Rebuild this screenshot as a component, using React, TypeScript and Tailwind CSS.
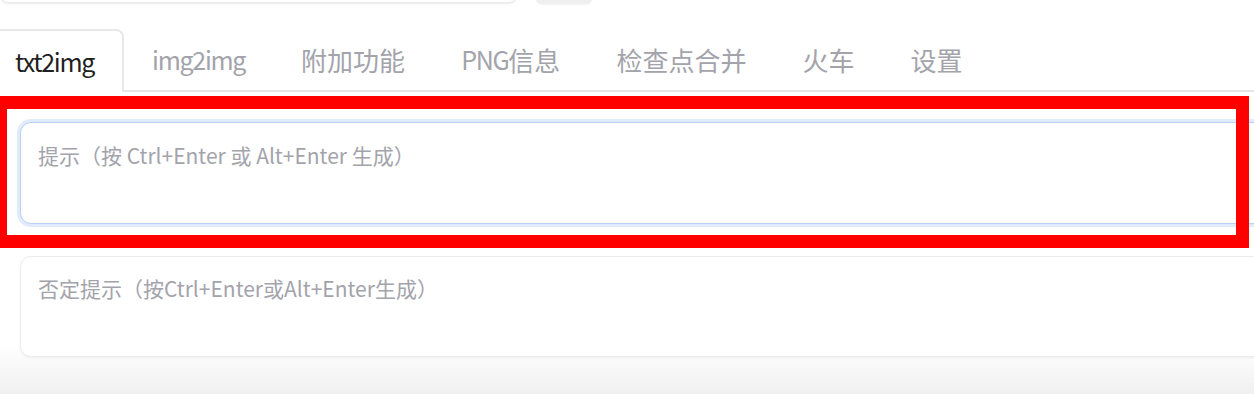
import React from 'react';

const tabs = ['txt2img', 'img2img', '附加功能', 'PNG信息', '检查点合并', '火车', '设置'];

const font = { fontFamily: '"Noto Sans CJK SC", "Noto Sans", sans-serif' };

// latin runs get tighter tracking, cjk runs a touch bigger
function TabLabel({ text }: { text: string }) {
  const parts = text.match(/[A-Za-z0-9]+|[^A-Za-z0-9]+/g) || [];
  return (
    <>
      {parts.map((p, i) =>
        /[A-Za-z0-9]/.test(p) ? (
          <span key={i} className="tracking-[-1.3px]">{p}</span>
        ) : (
          <span key={i} className="text-[26px]">{p}</span>
        )
      )}
    </>
  );
}

export default function App() {
  return (
    <div className="relative w-[1254px] h-[394px] overflow-hidden bg-white" style={font}>
      {/* bottom edges of the row above */}
      <div className="flex items-start h-[31px]">
        <div className="w-[517px] h-[40px] -mt-[37px] rounded-lg border border-[#ececec] bg-white shadow-[0_1px_2px_rgba(0,0,0,0.08)]" />
        <div className="ml-[18px] w-[58px] h-[40px] -mt-[36px] rounded-lg bg-[#efefef] shadow-[0_1px_2px_rgba(0,0,0,0.06)]" />
      </div>

      {/* tabs */}
      <div className="flex items-end border-b-2 border-[#e6e6e6] h-[61px]">
        {tabs.map((t, i) =>
          i === 0 ? (
            <div
              key={t}
              className="-ml-[15px] -mb-[2px] h-[63px] px-[28px] flex items-center rounded-t-lg border-2 border-b-0 border-[#e8e8e8] bg-white text-[25px] text-[#1f1f1f]"
            >
              <TabLabel text={t} />
            </div>
          ) : (
            <div key={t} className="h-[61px] px-[28px] flex items-center text-[25px] text-[#a3a3ab]">
              <TabLabel text={t} />
            </div>
          )
        )}
      </div>

      {/* prompt */}
      <div className="pt-[30px] pl-[20px]">
        <div className="w-[1260px] h-[102px] rounded-[11px] border border-[#b9d2f3] bg-white shadow-[0_0_0_3px_#e0ebfc] pt-[17px] pl-[17px] text-[21px] text-[#a3a3ab]">
          提示（按 Ctrl+Enter 或 Alt+Enter 生成）
        </div>
      </div>

      {/* negative prompt */}
      <div className="mt-[32px] pl-[20px] pb-[60px] bg-[linear-gradient(to_bottom,#ffffff_0px,#ffffff_88px,#eeeeee_145px)]">
        <div className="w-[1260px] h-[101px] rounded-[11px] border border-[#ececec] bg-white shadow-[0_1px_3px_rgba(0,0,0,0.05)] pt-[16px] pl-[17px] text-[21px] text-[#a3a3ab]">
          否定提示（按Ctrl+Enter或Alt+Enter生成）
        </div>
      </div>

      {/* red annotation box */}
      <div className="absolute left-0 top-[96px] w-[1249px] h-[152px] border-[13px] border-l-[7px] border-[#ff0000]" />
    </div>
  );
}
